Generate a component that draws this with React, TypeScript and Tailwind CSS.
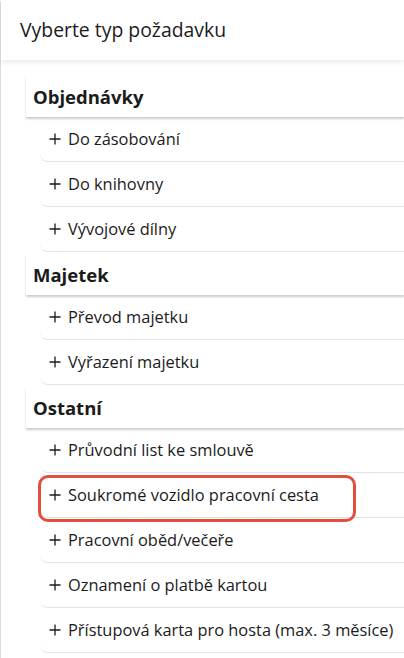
import React from "react";

const font = { fontFamily: '"Segoe UI", "Open Sans", "Noto Sans", sans-serif' };

type Section = { title: string; items: string[] };

const sections: Section[] = [
  { title: "Objednávky", items: ["Do zásobování", "Do knihovny", "Vývojové dílny"] },
  { title: "Majetek", items: ["Převod majetku", "Vyřazení majetku"] },
  {
    title: "Ostatní",
    items: [
      "Průvodní list ke smlouvě",
      "Soukromé vozidlo pracovní cesta",
      "Pracovní oběd/večeře",
      "Oznamení o platbě kartou",
      "Přístupová karta pro hosta (max. 3 měsíce)",
    ],
  },
];

function Plus() {
  return (
    <svg width="12" height="12" viewBox="0 0 12 12" className="shrink-0">
      <path d="M6 0.5V11.5M0.5 6H11.5" stroke="#1b1b1b" strokeWidth="1.3" />
    </svg>
  );
}

export default function App() {
  return (
    <div className="w-[404px] h-[658px] bg-white overflow-hidden text-[#1b1b1b]" style={font}>
      <div className="h-full border-l border-[#dcdcdc] rounded-tl-[3px] flex flex-col">
        <div className="h-[60px] shrink-0 flex items-center pl-[19px] text-[19.4px] relative z-10 bg-white shadow-[0_3px_5px_rgba(0,0,0,0.07)]">
          Vyberte typ požadavku
        </div>
        <div className="pt-[14px] flex flex-col">
          {sections.map((s) => (
            <div key={s.title} className="flex flex-col">
              <div className="mt-[2px] ml-[25px] h-[41px] flex items-center pl-[7px] text-[18.5px] font-bold bg-white relative z-[1] shadow-[0_2px_2px_rgba(0,0,0,0.2)]">
                {s.title}
              </div>
              {s.items.map((it) => (
                <div
                  key={it}
                  className="relative ml-[39px] h-[45px] flex items-center gap-[7px] pl-[9px] text-[16.4px] border-b border-[#e3e3e3] rounded-bl-[8px]"
                >
                  <Plus />
                  <span className="leading-none">{it}</span>
                  {it === "Soukromé vozidlo pracovní cesta" && (
                    <div className="absolute left-[-2px] top-[2px] w-[318px] h-[47px] border-[3px] border-[#e2503d] rounded-[10px]" />
                  )}
                </div>
              ))}
            </div>
          ))}
        </div>
      </div>
    </div>
  );
}
